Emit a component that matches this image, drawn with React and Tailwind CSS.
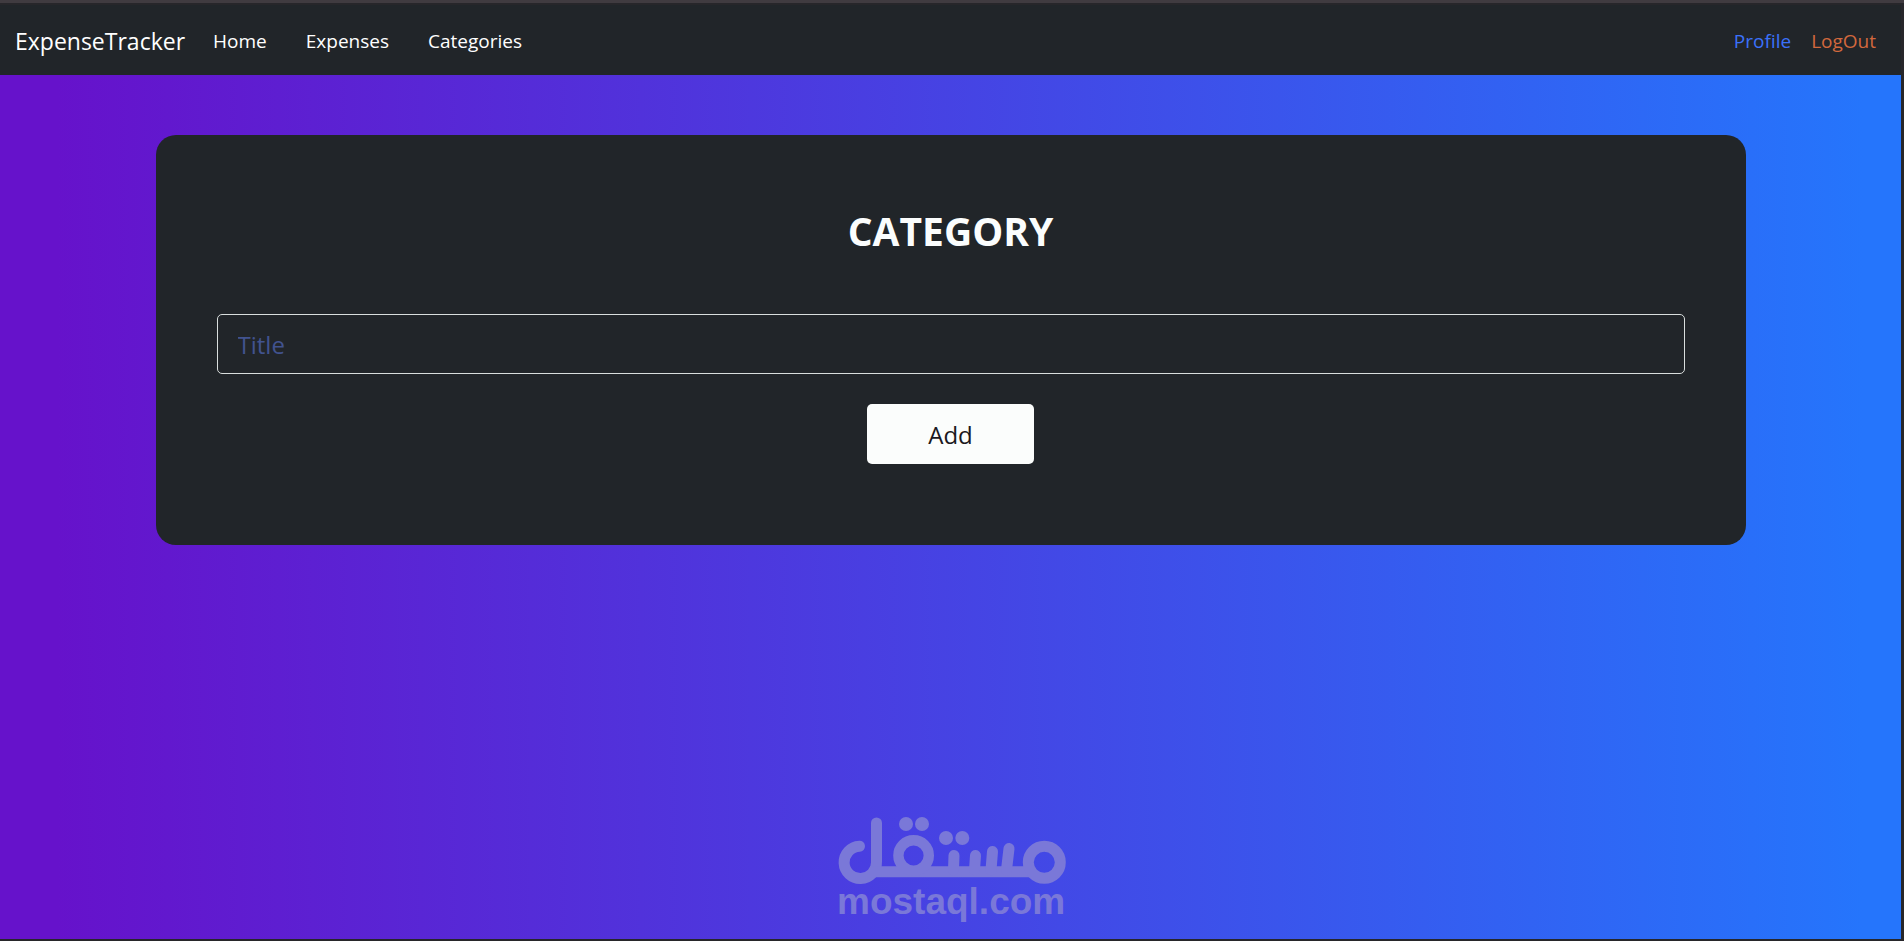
import React, { useState } from 'react';

const links = ['Home', 'Expenses', 'Categories'];

function Navbar() {
  return (
    <nav className="h-[70px] flex items-center bg-[#212529] px-[15px] pt-[2px] text-[19px]">
      <a href="#" className="text-[23px] text-white">ExpenseTracker</a>
      <div className="flex gap-[39px] ml-7">
        {links.map(l => (
          <a key={l} href="#" className="text-white">{l}</a>
        ))}
      </div>
      <div className="flex gap-5 ml-auto mr-[10px]">
        <a href="#" className="text-[#3b71fa]">Profile</a>
        <a href="#" className="text-[#d2683d]">LogOut</a>
      </div>
    </nav>
  );
}

function Logo() {
  return (
    <svg viewBox="-2 0 230 106" className="w-[230px]" fill="none" stroke="#7a78d8" strokeWidth="11">
      <path d="M21.500 29.200A16.200 16.200 0 1 0 38.500 45V6" strokeLinecap="round" />
      <path d="M32 54.700H196" />
      <circle cx="75.600" cy="38.500" r="15.200" strokeWidth="10.400" />
      <circle cx="206.300" cy="45.300" r="16" />
      <path d="M115.500 53l.5-14.500M136.500 53l1-14.500M153 53l1.500-18.500M168.500 53l2.500-21.500" strokeLinecap="round" />
      <g fill="#7a78d8" stroke="none">
        <circle cx="68" cy="7" r="7" />
        <circle cx="84" cy="7" r="7" />
        <circle cx="108" cy="21" r="7" />
        <circle cx="124.300" cy="21" r="7" />
        <text x="-1" y="97" fontSize="37" fontWeight="700" fontFamily="Liberation Sans, Arial, sans-serif">mostaql.com</text>
      </g>
    </svg>
  );
}

export default function App() {
  const [title, setTitle] = useState('');

  return (
    <div className="min-h-screen flex flex-col bg-[#27262a] border-t-[3px] border-[#403b40] pt-[2px] pr-[3px] pb-[2px] font-['Open_Sans','Noto_Sans',sans-serif]">
      <Navbar />
      <main className="flex-1 flex flex-col items-center bg-linear-[90deg,#6612cb_3%,#2575fc_98%] pt-[60px] pb-4">
        <section className="w-[calc(100%-311px)] rounded-[20px] bg-[#212529] px-[61px] pt-[72px] pb-[81px] text-center">
          <h2 className="text-[39px] leading-[48px] font-bold text-[#fbfdfd] uppercase mb-[59px]">Category</h2>
          <form onSubmit={e => e.preventDefault()}>
            <input
              type="text"
              aria-label="Title"
              placeholder="Title"
              value={title}
              onChange={e => setTitle(e.target.value)}
              className="block w-full h-[60px] mb-[30px] px-5 rounded-[5px] border border-[#d9dedd] bg-transparent text-2xl text-white placeholder:text-[#41538f]"
            />
            <button type="submit" className="h-[60px] w-[167px] rounded-[5px] bg-[#fbfdfc] pt-[2px] text-2xl text-[#1a1820]">Add</button>
          </form>
        </section>
        <div className="mt-auto">
          <Logo />
        </div>
      </main>
    </div>
  );
}
